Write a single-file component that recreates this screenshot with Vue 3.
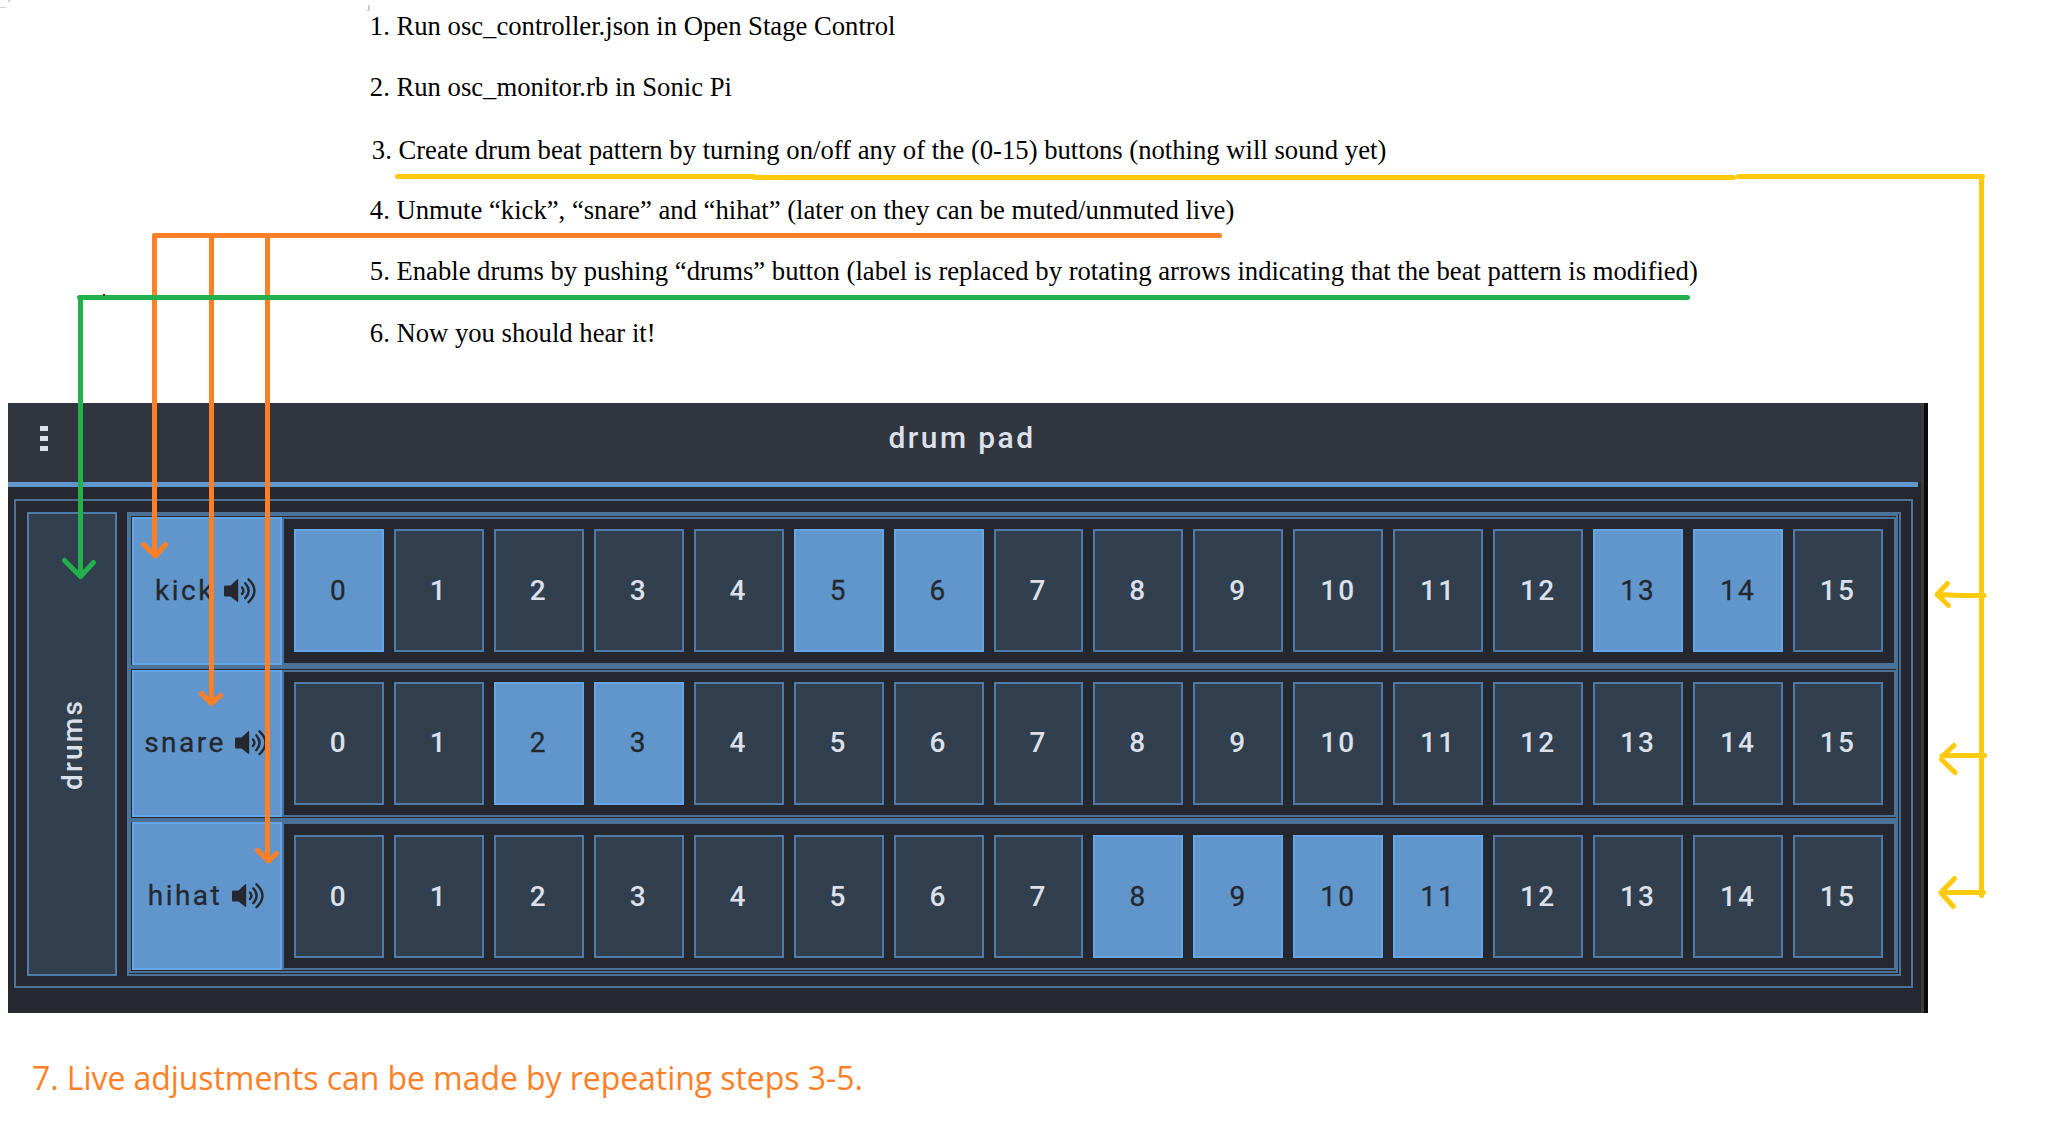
<script setup>
const steps = [
  '1. Run osc_controller.json in Open Stage Control',
  '2. Run osc_monitor.rb in Sonic Pi',
  '3. Create drum beat pattern by turning on/off any of the (0-15) buttons (nothing will sound yet)',
  '4. Unmute “kick”, “snare” and “hihat” (later on they can be muted/unmuted live)',
  '5. Enable drums by pushing “drums” button (label is replaced by rotating arrows indicating that the beat pattern is modified)',
  '6. Now you should hear it!',
]
const tracks = [
  { name: 'kick', on: [0, 5, 6, 13, 14] },
  { name: 'snare', on: [2, 3] },
  { name: 'hihat', on: [8, 9, 10, 11] },
]
</script>

<template>
  <main class="page">
    <ol class="steps">
      <li v-for="s in steps" :key="s">{{ s }}</li>
    </ol>

    <section class="panel">
      <header class="bar">
        <span class="menu"><i></i><i></i><i></i></span>
        <h1>drum pad</h1>
      </header>
      <div class="line"></div>
      <div class="frame">
        <button class="drums"><span>drums</span></button>
        <div class="matrix">
          <div v-for="t in tracks" :key="t.name" class="row">
            <button class="mute">
              <span>{{ t.name }}</span>
              <svg class="speaker" width="33" height="28" viewBox="0 0 33 28">
                <path d="M0 8.2Q0 7 1.2 7H6.500L13.200 .8Q14.200 .2 14.200 1.500V22.500Q14.200 24 13.200 23.200L6.500 18H1.200Q0 18 0 16.800Z" transform="translate(0 1.500)" fill="#25282f" />
                <g fill="none" stroke="#25282f" stroke-width="2.400" stroke-linecap="round">
                  <path d="M18 10.500Q20.800 13.700 18 17" />
                  <path d="M21.200 6.300Q28 13.700 21.200 21.200" />
                  <path d="M24.500 2.300Q36.500 13.700 24.500 25.200" />
                </g>
              </svg>
            </button>
            <div class="strip">
              <button v-for="n in 16" :key="n" class="cell" :class="{ on: t.on.includes(n - 1) }">{{ n - 1 }}</button>
            </div>
          </div>
        </div>
      </div>
    </section>

    <p class="note">7. Live adjustments can be made by repeating steps 3-5.</p>

    <!-- hand-drawn arrows that link the steps to the controls -->
    <svg class="marks" width="2058" height="1140" viewBox="0 0 2058 1140" fill="none" stroke-width="5" stroke-linecap="round" stroke-linejoin="round">
      <g stroke="none" fill="#cfcfcf">
        <path d="M0 7h6v1H0zM8 0h2v2H8zM366 10h4v1h-4zM368 5h2v5h-2z" />
      </g>
      <g stroke="#ffc90e">
        <path d="M397.500 176.500H754M754.500 177.500H1733.500M1738.500 176.500H1982.500M1981.500 177V895.500" />
        <path d="M1984 595.500H1963L1937 594.500L1947.500 583.500M1937 594.500L1948.500 605.500" />
        <path d="M1984.500 755.500H1943L1954 745.500M1941.500 759.500L1955 772.500M1942 756V759" />
        <path d="M1983.500 892.500H1941L1954.500 878.500M1941 893L1953.500 906.500" />
      </g>
      <g stroke="#ff7f27">
        <path d="M154.500 555V235.500H1219.500M211.500 235.500V702M267.500 235.500V860" />
        <path d="M143.500 544.500L155.500 556L165.500 544.500M201.500 693.500L211.500 703.500L220.500 695.500M257.500 850.500L268.500 861L276.500 853.500" />
      </g>
      <g stroke="#22b14c">
        <path d="M79.500 297.500H1687.500M80.500 297.500V576" />
        <path d="M64.500 560.500L80.500 576.500L93.500 562.500" />
      </g>
      <path d="M103 294h2v2h-2z" fill="#222" />
    </svg>
  </main>
</template>

<style>
body { margin: 0; background: #fff; }
</style>

<style scoped>
.page { position: relative; width: 2058px; height: 1140px; overflow: hidden; display: flex; flex-direction: column; background: #fff; }
.steps { list-style: none; margin: 0; padding: 6px 0 0 369.800px; height: 403px; flex: none; box-sizing: border-box; font: 26.670px/40px "Liberation Serif", serif; color: #000; white-space: pre; }
.steps li { height: 40px; margin-bottom: 21px; }
.steps li:nth-child(2) { margin-bottom: 23px; }
.steps li:nth-child(3) { margin-bottom: 20px; padding-left: 2px; }
.steps li:nth-child(5) { margin-bottom: 22px; }
.panel { box-sizing: border-box; width: 1920px; height: 610px; margin-left: 8px; flex: none; background: linear-gradient(90deg, #25282f 0 1913px, #3c3c3c 1913px 1916px, #0c0c0c 1916px); padding-right: 7px; font-family: Roboto, sans-serif; }
.bar { box-sizing: border-box; height: 79px; padding-bottom: 8px; background: #31353d; display: grid; grid-template-columns: 1fr auto 1fr; align-items: center; }
.menu { display: flex; flex-direction: column; gap: 5px; margin-left: 32px; }
.menu i { width: 8px; height: 5px; background: #dbe0ea; }
h1 { margin: 0 5px 2px 0; font-size: 30px; font-weight: 500; letter-spacing: 2.400px; color: #dbe0ea; }
.line { height: 5px; width: 1910px; background: #6196cc; }
.frame { box-sizing: border-box; width: 1899px; height: 489px; margin: 12px 0 0 6px; border: 2px solid #4d7298; padding: 11px 10px 10px 11px; display: flex; gap: 10px; }
button { box-sizing: border-box; border: 2px solid #507ba9; background: #313f4f; margin: 0; padding: 0; font: 500 28px/34px Roboto, sans-serif; letter-spacing: 2.200px; color: #dbe0ea; display: flex; align-items: center; justify-content: center; }
.drums { width: 90px; height: 464px; padding: 2px 0 0 1px; }
.drums span { writing-mode: vertical-rl; transform: rotate(180deg); }
.matrix { box-sizing: border-box; width: 1774px; height: 464px; border: 2px solid #4d7298; }
.row { box-sizing: border-box; width: 1769px; height: 153px; border: 2px solid #4d7298; padding: 1px 0 0 1px; display: flex; }
.row:nth-child(3) { padding-top: 0; }
.mute { width: 150px; height: 148px; border-color: #66a5e6; background: #6196cc; color: #25282f; gap: 9.500px; font-weight: 400; -webkit-text-stroke: .3px #25282f; letter-spacing: 2.500px; padding-right: 1.500px; }
.strip { box-sizing: border-box; width: 1614px; height: 148px; border: 2px solid #4d7298; padding: 10px 11.150px 0 9.950px; display: flex; gap: 10px; }
.row:nth-child(2) .mute, .row:nth-child(2) .strip { height: 147px; }
.row:nth-child(2) .cell, .row:nth-child(2) .mute { padding-bottom: 2px; }
.row:nth-child(3) .strip { padding-top: 11px; }
.cell { flex: 1 1 0; min-width: 0; height: 123px; }
.cell.on { border-color: #66a5e6; background: #6196cc; color: #25282f; font-weight: 400; -webkit-text-stroke: .3px #25282f; }
.note { margin: 41px 0 0 32px; font: 32px/48px "Open Sans", sans-serif; letter-spacing: -.065px; color: #ff7f27; white-space: pre; }
.marks { position: absolute; left: 0; top: 0; pointer-events: none; }
</style>
